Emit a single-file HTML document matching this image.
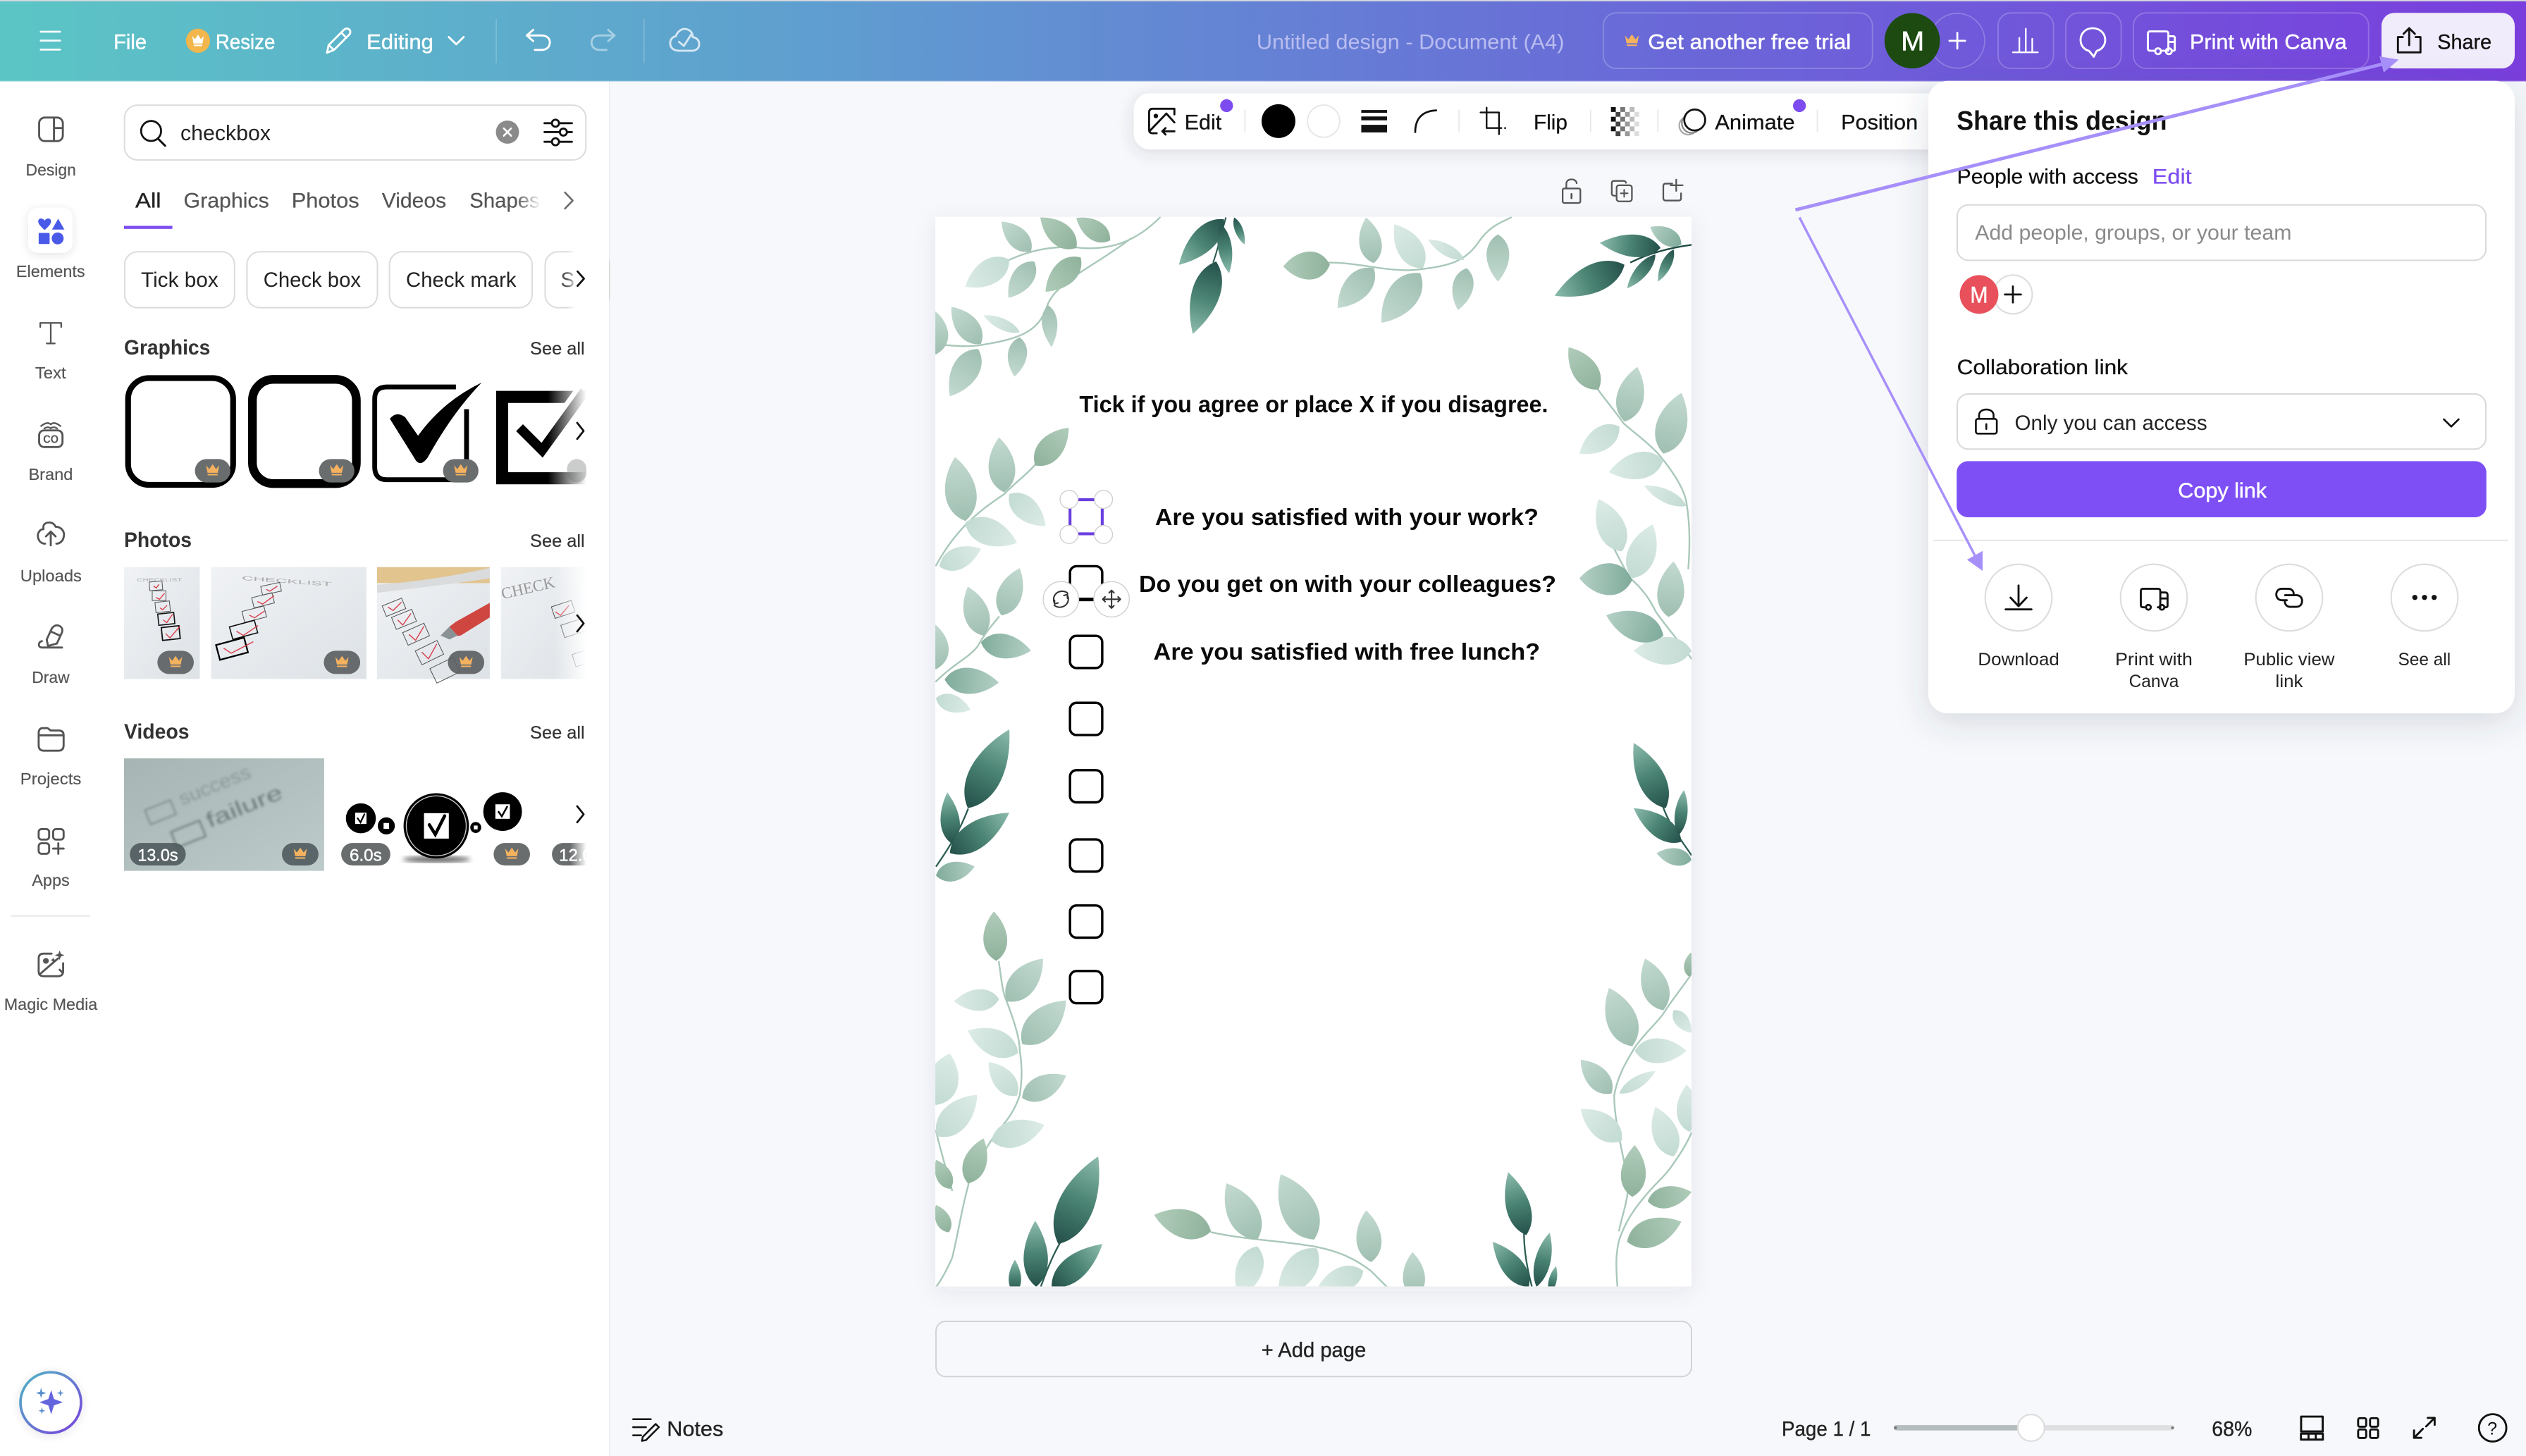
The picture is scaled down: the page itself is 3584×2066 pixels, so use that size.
<!DOCTYPE html>
<html><head><meta charset="utf-8"><title>Untitled design</title>
<style>
html,body{margin:0;padding:0;background:#f7f8fb;width:3584px;height:2066px;overflow:hidden}
svg{display:block}
text{font-family:"Liberation Sans",sans-serif;fill:#222}
.m{stroke:#222;stroke-width:.15}
.w{fill:#fff;stroke:#fff;stroke-width:.2}
.r{fill:#555;font-size:10px;stroke:#555;stroke-width:.08}
.ic{fill:none;stroke:#555;stroke-width:1.25;stroke-linecap:round;stroke-linejoin:round}
.wi{fill:none;stroke:#fff;stroke-width:1.25;stroke-linecap:round;stroke-linejoin:round}
.bi{fill:none;stroke:#111;stroke-width:1.25;stroke-linecap:round;stroke-linejoin:round}
.b{font-weight:bold;fill:#0a0a0a}
.tab{fill:#555;font-size:13px;stroke:#555;stroke-width:.1}
.sa{fill:#333;font-size:11px;stroke:#333;stroke-width:.1}
.h{fill:#333;font-size:13px;font-weight:bold}
.box{fill:none;stroke:#000;stroke-width:1.5}
.stem{fill:none;stroke:#a9c8b9;stroke-width:1.05;stroke-linecap:round}
</style></head><body>
<svg xmlns="http://www.w3.org/2000/svg" width="3584" height="2066" viewBox="0 0 1568 903.875">
<defs>
<linearGradient id="top" x1="0" x2="1" y1="0" y2="0"><stop offset="0" stop-color="#5bc5c5"/><stop offset=".33" stop-color="#5f9dd0"/><stop offset=".66" stop-color="#6a68d8"/><stop offset="1" stop-color="#7a3edd"/></linearGradient>
<linearGradient id="ring" x1="0" x2="1" y1="0" y2="1"><stop offset="0" stop-color="#4fb8c4"/><stop offset="1" stop-color="#7a3edd"/></linearGradient>
<linearGradient id="a"><stop offset="0" stop-color="#9fbfb1"/><stop offset="1" stop-color="#c3dad0"/></linearGradient>
<linearGradient id="b"><stop offset="0" stop-color="#c2dbd2"/><stop offset="1" stop-color="#dcebe6"/></linearGradient>
<linearGradient id="c"><stop offset="0" stop-color="#8fb29c"/><stop offset="1" stop-color="#b0ccba"/></linearGradient>
<linearGradient id="d"><stop offset="0" stop-color="#24504a"/><stop offset=".5" stop-color="#4a8373"/><stop offset="1" stop-color="#8dbcae"/></linearGradient>
<linearGradient id="e"><stop offset="0" stop-color="#7fab9b"/><stop offset="1" stop-color="#b4d0c5"/></linearGradient>
<linearGradient id="fade" x1="0" x2="1" y1="0" y2="0"><stop offset="0" stop-color="#fff" stop-opacity="0"/><stop offset="1" stop-color="#fff"/></linearGradient>
<linearGradient id="p1" x1="0" x2="1" y1="0" y2="1"><stop offset="0" stop-color="#f0f2f5"/><stop offset="1" stop-color="#dde2e6"/></linearGradient>
<linearGradient id="v1" x1="0" x2="1" y1="0" y2="1"><stop offset="0" stop-color="#a6b5b3"/><stop offset="1" stop-color="#bdcaca"/></linearGradient>
<path id="l" d="M0 0C.2-.34.66-.3 1 0C.66.3.2.34 0 0Z"/>
<path id="w" d="M0 0C.2-.44.7-.36 1 0C.7.36.2.44 0 0Z"/>
<path id="n" d="M0 0C.25-.2.7-.17 1 0C.7.17.25.2 0 0Z"/>
<path id="t" d="M0 0C.2-.25.6-.24 1 0C.6.24.2.25 0 0Z"/>
<g id="cr"><path d="M-4.1-3.2L-2.1-.8L0-3.8L2.1-.8L4.1-3.2L3.2 1.5H-3.2Z" fill="#f4b25f"/><rect x="-3.1" y="2.2" width="6.2" height=".9" fill="#f4b25f"/></g>
<clipPath id="pg"><rect x="580.6" y="134.6" width="469.4" height="664"/></clipPath>
<clipPath id="gr"><rect x="77" y="230" width="287" height="80"/></clipPath>
<clipPath id="ph3"><rect x="234" y="352" width="70" height="69.5"/></clipPath>
<clipPath id="ph4"><rect x="311" y="352" width="53" height="69.5"/></clipPath>
<clipPath id="vd1"><rect x="77" y="470.8" width="124.2" height="69.8"/></clipPath>
<filter id="sPanel" x="-20%" y="-20%" width="140%" height="140%"><feDropShadow dx="0" dy="5" stdDeviation="10" flood-color="#40455a" flood-opacity=".18"/></filter>
<filter id="sBar" x="-10%" y="-50%" width="120%" height="220%"><feDropShadow dx="0" dy="2" stdDeviation="5" flood-color="#40455a" flood-opacity=".16"/></filter>
<filter id="sPage" x="-10%" y="-10%" width="120%" height="120%"><feDropShadow dx="0" dy="3" stdDeviation="7" flood-color="#40455a" flood-opacity=".08"/></filter>
<filter id="sTile" x="-50%" y="-50%" width="200%" height="200%"><feDropShadow dx="0" dy="1" stdDeviation="2.5" flood-color="#40455a" flood-opacity=".14"/></filter>
<filter id="bl"><feGaussianBlur stdDeviation=".8"/></filter>
<filter id="bl2"><feGaussianBlur stdDeviation="1.5"/></filter>
</defs>

<rect width="1568" height="904" fill="#f7f8fb"/>

<!-- canvas page -->
<rect x="580.6" y="134.6" width="469.4" height="664" fill="#fff" filter="url(#sPage)"/>
<g clip-path="url(#pg)">
<path class="stem" d="M720 135C705 150 690 155 672 154C655 152 640 155 625 162M702 148C680 165 655 175 650 190C645 205 635 210 610 214C598 216 590 214 581 214"/>
<path class="stem" d="M825 163C845 163 865 170 883 167C900 165 910 162 918 150C925 140 932 138 938 135"/>
<path class="stem" d="M581 351C590 335 600 322 623 307C633 297 637 295 643 288M581 423C592 412 602 408 607 401C612 392 616 388 620 383"/>
<path class="stem" d="M620 597C622 610 622 615 625 622C630 635 633 645 633 652C635 665 634 672 633 680C628 695 620 700 614 710C608 720 602 728 601 736C597 750 595 765 591 781C587 790 584 795 581 799M581 702C584 715 588 728 591 739"/>
<path class="stem" d="M752 765C775 770 795 770 817 774C832 777 842 782 851 789C855 793 858 796 861 799"/>
<path class="stem" d="M1004 799C1003 785 1003 778 1005 770C1009 758 1015 750 1020 744C1027 735 1034 730 1039 722C1044 715 1048 708 1050 703M1005 764C1008 750 1012 742 1010 730C1007 715 1002 695 1002 680C1004 668 1010 658 1015 650C1022 640 1029 635 1034 627C1040 618 1045 612 1049 606"/>
<path class="stem" d="M992 242C998 250 1003 256 1008 263C1016 270 1026 277 1032 285C1040 295 1046 305 1047 313C1049 325 1049 340 1048 353M992 323C1000 335 1005 348 1012 359C1020 366 1024 372 1028 380C1035 390 1044 400 1050 409"/>
<path d="M761 135C758 145 756 155 753 163" fill="none" stroke="#2b5c51" stroke-width=".9"/>
<path d="M1050 152C1035 154 1022 158 1012 163" fill="none" stroke="#1e4a42" stroke-width="1"/>
<path d="M581 538C590 525 596 515 601 502" fill="none" stroke="#2b5c51" stroke-width="1"/>
<path d="M646 799C650 788 654 778 659 770" fill="none" stroke="#2b5c51" stroke-width="1"/>
<path d="M951 799C948 788 946 776 946 765" fill="none" stroke="#2b5c51" stroke-width="1"/>
<path d="M1032 500C1036 512 1044 522 1050 531" fill="none" stroke="#2b5c51" stroke-width="1"/>

<g fill="url(#a)">
<use href="#l" transform="matrix(-18.3 -18.4 18.4 -18.3 640 156)"/>
<use href="#l" transform="matrix(-16 22.6 -22.6 -16 642 162.3)"/>
<use href="#l" transform="matrix(-18.3 -23 23 -18.3 608.9 213.5)"/>
<use href="#t" transform="matrix(2.2 26 -26 2.2 650.6 189.5)"/>
<use href="#l" transform="matrix(-3.3 24.4 -24.4 -3.3 633 209.4)"/>
<use href="#l" transform="matrix(-17.7 29.3 -29.3 -17.7 607.3 216.7)"/>
<use href="#w" transform="matrix(-2 -28 28 -2 581 220)"/>
<use href="#l" transform="matrix(-4.8 -28.3 28.3 -4.8 852.8 163.3)"/>
<use href="#l" transform="matrix(-22.5 24.7 -24.7 -22.5 852.8 166.5)"/>
<use href="#l" transform="matrix(-24 30.8 -30.8 -24 881.6 169.6)"/>
<use href="#l" transform="matrix(-5.5 26 -26 -5.5 910.5 166.5)"/>
<use href="#l" transform="matrix(0 29.3 -29.3 0 929.8 145.5)"/>
<use href="#l" transform="matrix(-3.2 -34.1 34.1 -3.2 623.3 305.6)"/>
<use href="#l" transform="matrix(-6.4 -39.7 39.7 -6.4 599.2 323.4)"/>
<use href="#l" transform="matrix(11.3 -29.3 29.3 11.3 621.7 382)"/>
<use href="#l" transform="matrix(-9.7 -30.4 30.4 -9.7 610.5 394.6)"/>
<use href="#w" transform="matrix(-2 -29 29 -2 581 415.5)"/>
<use href="#l" transform="matrix(22.4 -26.5 26.5 22.4 625 621.6)"/>
<use href="#l" transform="matrix(27.3 -27 27 27.3 634.5 648.1)"/>
<use href="#l" transform="matrix(27.3 -13.9 13.9 27.3 634.5 681.6)"/>
<use href="#l" transform="matrix(-19.2 -34.9 34.9 -19.2 780.5 769.5)"/>
<use href="#l" transform="matrix(-20.8 -40.5 40.5 -20.8 815.8 769.5)"/>
<use href="#l" transform="matrix(-3.1 -32.1 32.1 -3.1 851.1 783.5)"/>
<use href="#l" transform="matrix(-1.6 -28.5 28.5 -1.6 878.4 805.8)"/>
<use href="#l" transform="matrix(-14.4 -36.2 36.2 -14.4 1013.2 649.5)"/>
<use href="#l" transform="matrix(-11.3 -32.1 32.1 -11.3 1032.5 627.2)"/>
<use href="#l" transform="matrix(-19.2 -20.9 20.9 -19.2 1000.4 678.8)"/>
<use href="#l" transform="matrix(8 -33.9 33.9 8 1008.4 261.7)"/>
<use href="#l" transform="matrix(11.2 -37.7 37.7 11.2 1032.5 281.6)"/>
<use href="#l" transform="matrix(3.2 -34.5 34.5 3.2 1035.7 383)"/>
</g>
<g fill="url(#b)">
<use href="#l" transform="matrix(-27.3 16.8 -16.8 -27.3 626.5 161.2)"/>
<use href="#n" transform="matrix(-22.5 -10.4 10.4 -22.5 633 206.2)"/>
<use href="#l" transform="matrix(-17.6 -27.3 27.3 -17.6 883.2 166.5)"/>
<use href="#n" transform="matrix(-22.5 -12.5 12.5 -22.5 908.9 161.2)"/>
<use href="#l" transform="matrix(22.5 19.9 -19.9 22.5 626.5 306.7)"/>
<use href="#l" transform="matrix(32.1 12.5 -12.5 32.1 599.2 324.5)"/>
<use href="#l" transform="matrix(25.7 -11.1 11.1 25.7 583.2 351.7)"/>
<use href="#l" transform="matrix(21.4 7.3 -7.3 21.4 581 433.3)"/>
<use href="#l" transform="matrix(-27.9 1.4 -1.4 -27.9 620.1 620.2)"/>
<use href="#l" transform="matrix(-31.2 -13.9 13.9 -31.2 632 653.7)"/>
<use href="#l" transform="matrix(-17.6 -20.9 20.9 -17.6 631.3 680.2)"/>
<use href="#l" transform="matrix(33 -9.7 9.7 33 615.3 708.1)"/>
<use href="#l" transform="matrix(25 -25.6 25.6 25 581.6 705.3)"/>
<use href="#w" transform="matrix(8.6 -32 32 8.6 581 686)"/>
<use href="#l" transform="matrix(-11.2 32.1 -32.1 -11.2 780.5 773.7)"/>
<use href="#l" transform="matrix(-24 30.8 -30.8 -24 817.4 775)"/>
<use href="#l" transform="matrix(-28.9 11.2 -11.2 -28.9 846.3 789)"/>
<use href="#l" transform="matrix(32.1 0 0 32.1 1014.8 652.3)"/>
<use href="#n" transform="matrix(22.4 -13.9 13.9 22.4 1005.2 678.8)"/>
<use href="#l" transform="matrix(-25.6 -19.5 19.5 -25.6 1006.8 708.1)"/>
<use href="#l" transform="matrix(-11.3 -30.7 30.7 -11.3 1038.9 717.9)"/>
<use href="#l" transform="matrix(-1.5 -29.3 29.3 -1.5 1048.5 702.6)"/>
<use href="#l" transform="matrix(11 14 -14 11 1038.9 627.2)"/>
<use href="#l" transform="matrix(-24.8 16.8 -16.8 -24.8 1005.2 264.8)"/>
<use href="#l" transform="matrix(-33.7 7.3 -7.3 -33.7 1032.5 285.8)"/>
<use href="#n" transform="matrix(-26.3 -12.5 12.5 -26.3 1046.9 314)"/>
<use href="#l" transform="matrix(-14.5 -32.5 32.5 -14.5 1006.8 342.3)"/>
<use href="#l" transform="matrix(12.8 -33.5 33.5 12.8 1013.2 359)"/>
<use href="#l" transform="matrix(-35.9 0 0 -35.9 1050 404)"/>
</g>
<g fill="url(#c)">
<use href="#l" transform="matrix(-22.4 -18.9 18.9 -22.4 668.2 153.9)"/>
<use href="#l" transform="matrix(-21 -14 14 -21 689.1 149.3)"/>
<use href="#l" transform="matrix(-21.8 21.3 -21.3 -21.8 670.8 159.8)"/>
<use href="#w" transform="matrix(-28.9 1 -1 -28.9 825.5 164.4)"/>
<use href="#l" transform="matrix(20.8 -23.4 23.4 20.8 642.6 288.9)"/>
<use href="#l" transform="matrix(-1.6 -30.7 30.7 -1.6 618.5 596.5)"/>
<use href="#l" transform="matrix(9.7 -27.9 27.9 9.7 600.8 734.6)"/>
<use href="#l" transform="matrix(-9 -18 18 -9 590 738)"/>
<use href="#l" transform="matrix(-8 -17 17 -8 589 765)"/>
<use href="#l" transform="matrix(-35.3 -10.3 10.3 -35.3 751.7 764.5)"/>
<use href="#l" transform="matrix(1.6 -32.1 32.1 1.6 1013.2 743)"/>
<use href="#l" transform="matrix(27.2 -5.8 5.8 27.2 1022.8 745.8)"/>
<use href="#l" transform="matrix(33.7 -12.5 12.5 33.7 1010 770.9)"/>
<use href="#l" transform="matrix(-18.6 -26.2 26.2 -18.6 992.3 241.8)"/>
<use href="#l" transform="matrix(1 -15 15 1 1048.5 606.3)"/>
</g>
<g fill="url(#e)">
<use href="#l" transform="matrix(31.1 5.2 -5.2 31.1 608.9 398.8)"/>
<use href="#l" transform="matrix(33.6 2 -2 33.6 586.4 421.8)"/>
<use href="#w" transform="matrix(-32.8 -1 1 -32.8 1013.2 360)"/>
<use href="#l" transform="matrix(-35.4 -12.6 12.6 -35.4 1032.5 394.6)"/>
<use href="#l" transform="matrix(-19.3 -10.9 10.9 -19.3 1043.7 151.8)"/>
<use href="#l" transform="matrix(24 -5.5 5.5 24 581 543.5)"/>
<use href="#l" transform="matrix(-21.7 -4.2 4.2 -21.7 1050 533.8)"/>
</g>
<g fill="url(#d)">
<use href="#t" transform="matrix(-27.9 28.3 -28.3 -27.9 759.7 136.1)"/>
<use href="#n" transform="matrix(4.9 30.4 -30.4 4.9 758 139.2)"/>
<use href="#n" transform="matrix(6.4 16.8 -16.8 6.4 766.1 135)"/>
<use href="#t" transform="matrix(-14.5 45 -45 -14.5 754.9 162.3)"/>
<use href="#t" transform="matrix(-37.8 -3.1 3.1 -37.8 1030.8 153.9)"/>
<use href="#t" transform="matrix(-43.4 19.2 -19.2 -43.4 1008.4 164.4)"/>
<use href="#n" transform="matrix(-17.6 21 -21 -17.6 1027.6 158)"/>
<use href="#n" transform="matrix(-9.7 19.9 -19.9 -9.7 1038.9 154.9)"/>
<use href="#t" transform="matrix(25.7 -48.9 48.9 25.7 600.8 501.7)"/>
<use href="#t" transform="matrix(-3.2 -32.1 32.1 -3.2 591.2 524)"/>
<use href="#t" transform="matrix(36.9 -25.1 25.1 36.9 589.6 529.6)"/>
<use href="#t" transform="matrix(24.7 -54.4 54.4 24.7 657 772.3)"/>
<use href="#t" transform="matrix(-.6 -41 41 -.6 643.2 798.8)"/>
<use href="#t" transform="matrix(31.5 -26.5 26.5 31.5 652.8 798.8)"/>
<use href="#t" transform="matrix(0 -21 21 0 630 803)"/>
<use href="#t" transform="matrix(-11.2 -39 39 -11.2 947.4 766.7)"/>
<use href="#t" transform="matrix(-22.4 -27.9 27.9 -22.4 949 798.8)"/>
<use href="#n" transform="matrix(8.1 -33.5 33.5 8.1 953.8 798.8)"/>
<use href="#n" transform="matrix(4 -17 17 4 961.9 803)"/>
<use href="#t" transform="matrix(-19.9 -40.5 40.5 -19.9 1034 501.7)"/>
<use href="#t" transform="matrix(-29.6 -20.9 20.9 -29.6 1043.7 522.6)"/>
<use href="#n" transform="matrix(3.3 -27.9 27.9 3.3 1042 518.4)"/>
</g>
</g>

<!-- page text -->
<text class="b" x="670" y="256" font-size="14.6" textLength="291" lengthAdjust="spacingAndGlyphs">Tick if you agree or place X if you disagree.</text>
<text class="b" x="717" y="326" font-size="14.6" textLength="238" lengthAdjust="spacingAndGlyphs">Are you satisfied with your work?</text>
<text class="b" x="707" y="367.5" font-size="14.6" textLength="259" lengthAdjust="spacingAndGlyphs">Do you get on with your colleagues?</text>
<text class="b" x="716" y="409.5" font-size="14.6" textLength="240" lengthAdjust="spacingAndGlyphs">Are you satisfied with free lunch?</text>

<!-- checkboxes -->
<rect class="box" x="664.2" y="351.5" width="20" height="21" rx="4"/>
<rect class="box" x="664.2" y="394.7" width="20" height="20" rx="4"/>
<rect class="box" x="664.2" y="436.3" width="20" height="20" rx="4"/>
<rect class="box" x="664.2" y="478.1" width="20" height="20" rx="4"/>
<rect class="box" x="664.2" y="521.1" width="20" height="20" rx="4"/>
<rect class="box" x="664.2" y="562.1" width="20" height="20" rx="4"/>
<rect class="box" x="664.2" y="602.8" width="20" height="20" rx="4"/>
<!-- selected -->
<rect x="664.2" y="310.2" width="20" height="21.2" rx="3" fill="none" stroke="#6a3fe0" stroke-width="1.8"/>
<g fill="#fff" stroke="#cfcfcf" stroke-width=".6">
<circle cx="663.6" cy="310" r="5.6"/><circle cx="685" cy="310" r="5.6"/><circle cx="663.6" cy="331.8" r="5.6"/><circle cx="685" cy="331.8" r="5.6"/>
</g>
<rect x="668" y="371" width="12" height="1.4" fill="#000"/>
<g fill="#fff" stroke="#cfcfcf" stroke-width=".6"><circle cx="658.6" cy="372" r="11"/><circle cx="690" cy="372" r="11"/></g>
<g fill="none" stroke="#333" stroke-width=".9" stroke-linecap="round" stroke-linejoin="round">
<path d="M662.8 368.3C660.5 366.3 656.6 366.7 654.8 369.4C653.8 371 653.8 373 654.6 374.4M654.6 374.9V372.6M654.6 374.9L656.8 374.3M654.4 375.7C656.7 377.7 660.6 377.3 662.4 374.6C663.4 373 663.4 371 662.6 369.6M662.6 369.1V371.4M662.6 369.1L660.4 369.7"/>
<path d="M690 366.5V377.5M684.5 372H695.5M688.5 368L690 366.5L691.5 368M688.5 376L690 377.5L691.5 376M686 370.5L684.5 372L686 373.5M694 370.5L695.5 372L694 373.5"/>
</g>

<!-- add page -->
<rect x="581" y="820.3" width="469" height="34.3" rx="6" fill="#f7f8fb" stroke="#cfd0d2" stroke-width=".8"/>
<text class="m" x="783" y="842.5" font-size="13" textLength="65" lengthAdjust="spacingAndGlyphs">+ Add page</text>

<!-- page action icons -->
<g class="ic" stroke-width="1">
<rect x="970" y="117" width="11" height="9" rx="1" style="stroke-width:1"/>
<path d="M972.3 117V114C972.3 110.5 978.5 110.5 978.7 113.8" style="stroke-width:1"/>
<path d="M975.5 120.5V123" style="stroke-width:1.2"/>
<path d="M1002.8 121.5H1002C1001 121.5 1000.5 121 1000.5 120V113.8C1000.5 112.8 1001 112.3 1002 112.3H1007.8C1008.8 112.3 1009.3 112.8 1009.3 113.5" style="stroke-width:1"/>
<rect x="1003.5" y="115" width="9.5" height="10" rx="1.5" style="stroke-width:1"/>
<path d="M1008.2 117.8V122.2M1006 120H1010.4" style="stroke-width:.9"/>
<path d="M1038 114H1034C1033 114 1032.5 114.5 1032.5 115.5V123C1032.5 124 1033 124.5 1034 124.5H1042C1043 124.5 1043.5 124 1043.5 123V120" style="stroke-width:1"/>
<path d="M1040.5 111.5V118.5M1037 115H1044.5" style="stroke-width:1"/>
</g>

<!-- notes / bottom bar -->
<path class="bi" d="M393 881H404M393 886H401M393 891H398M399 892L407 884L409 886L401 894L398.5 894.5Z" style="stroke-width:1.1"/>
<text class="m" x="414" y="891.3" font-size="13" textLength="35" lengthAdjust="spacingAndGlyphs">Notes</text>
<text class="m" x="1106" y="891.3" font-size="13" textLength="55.3" lengthAdjust="spacingAndGlyphs">Page 1 / 1</text>
<rect x="1175.6" y="884.7" width="174" height="3.3" rx="1.6" fill="#dfe0e2"/>
<rect x="1175.6" y="884.7" width="85" height="3.3" rx="1.6" fill="#b5bdbf"/>
<circle cx="1176.6" cy="886.4" r=".9" fill="#777"/><circle cx="1348.6" cy="886.4" r=".9" fill="#777"/>
<circle cx="1260.8" cy="886.4" r="8.3" fill="#fff" stroke="#dcdcdc" stroke-width=".9"/>
<text class="m" x="1373" y="891.3" font-size="13" textLength="25" lengthAdjust="spacingAndGlyphs">68%</text>
<g class="bi">
<path d="M1428.4 879.4H1441.8V888.6H1428.4Z" style="stroke-width:1.3"/>
<rect x="1428.3" y="890" width="13.6" height="3.7" fill="none" stroke="#111" stroke-width="1.3"/>
<path d="M1433 890.5V893.5M1437.5 890.5V893.5"/>
<rect x="1463.8" y="880.4" width="5" height="5.3" rx="1"/><rect x="1471.2" y="880.4" width="5" height="5.3" rx="1"/>
<rect x="1463.8" y="887.4" width="5" height="5.3" rx="1"/><rect x="1471.2" y="887.4" width="5" height="5.3" rx="1"/>
<path d="M1504 887L1498.5 892.6M1498.5 888V892.6H1503M1506 885.5L1511.3 880.2M1507 880.2H1511.3V884.5"/>
<circle cx="1547.3" cy="886.4" r="8.5"/>
</g>
<text x="1544" y="890.5" font-size="11" style="fill:#111">?</text>

<!-- sidebar -->
<rect x="0" y="50" width="378" height="854" fill="#fff"/>
<rect x="378" y="50" width=".7" height="854" fill="#eceef2"/>
<rect x="17.5" y="129" width="27.5" height="28" rx="6" fill="#fff" filter="url(#sTile)"/>

<!-- rail icons -->
<g class="ic">
<rect x="24.3" y="73" width="14.7" height="14.6" rx="3.5"/><path d="M33.5 73V87.6M33.5 79.5H39"/>
<path d="M25 203V200.5H38V203M31.5 200.5V213M29 213.2H34" style="stroke-width:1"/>
<path d="M25.5 264.5C28 262.5 30 262 31.5 263.5C33 262 35 262.5 37.5 264.5M27.5 266C29 265 30.5 265 31.5 266C32.5 265 34 265 35.5 266" style="stroke-width:1"/>
<rect x="24.3" y="267.2" width="14.5" height="10.3" rx="3"/>
<path d="M27.5 325.5C29 324 33 323.5 34.5 327C38 327 40.5 330 39.5 333.5C39 336 37 337.5 35 337.5M28 337.5C25 337.5 23.5 335 23.5 332.5C23.5 330.5 25 328.5 27 328.5C26.8 327 27 326 27.5 325.5M31.5 338.5V330.5M28.5 333L31.5 330L34.5 333"/>
<path d="M29 397L32 390.5C33 388.5 35 387.7 36.8 388.5C38.5 389.3 39.2 391 38.3 393L35.3 399.5L29.8 401ZM31.5 392L37 394.5M26 398C23.5 398.5 23.5 402 26 402H38.5"/>
<path d="M24 455C24 453 25 452 26.5 452H29.5L31.5 453.5H36.5C38.5 453.5 39.5 454.5 39.5 456.5V462.5C39.5 464.8 38.5 466 36.5 466H27C25 466 24 464.8 24 462.5ZM24 456.5H39.5"/>
<rect x="24" y="514.7" width="6.5" height="6.5" rx="1.8"/><rect x="33" y="514.7" width="6.5" height="6.5" rx="1.8"/><rect x="24" y="523.5" width="6.5" height="6.5" rx="1.8"/>
<path d="M33 526.8H39.5M36.2 523.5V530"/>
<path d="M32 592H27C25 592 24 593 24 595V603C24 605 25 606 27 606H36C38 606 39.2 605 39.2 603V598M24.5 605L36 595M37 602L39 604"/>
</g>
<circle cx="28.5" cy="596.5" r="1.8" fill="#555"/>
<path d="M37 590L37.8 592.2L40 593L37.8 593.8L37 596L36.2 593.8L34 593L36.2 592.2ZM33 594.5L33.5 595.5L34.5 596L33.5 596.5L33 597.5L32.5 596.5L31.5 596L32.5 595.5Z" fill="#555"/>
<text x="26.8" y="275" font-size="7" font-weight="bold" textLength="9.5" lengthAdjust="spacingAndGlyphs" style="fill:#555">CO</text>
<!-- elements icon -->
<g fill="#4a5ae8">
<path d="M27.7 142.8C25 140.5 23.7 138.8 23.7 137.5C23.7 135.9 25 135.4 26 135.7C26.8 135.9 27.4 136.4 27.7 137C28 136.4 28.6 135.9 29.4 135.7C30.4 135.4 31.7 135.9 31.7 137.5C31.7 138.8 30.4 140.5 27.7 142.8Z"/>
<path d="M36.1 135.8L40 142.5H32.3Z"/>
<rect x="24" y="144.6" width="6.8" height="6.9" rx=".5"/>
<circle cx="35.8" cy="148" r="3.7"/>
</g>
<text class="r" x="16" y="109" textLength="31.2" lengthAdjust="spacingAndGlyphs">Design</text>
<text class="r" x="10" y="172" textLength="42.8" lengthAdjust="spacingAndGlyphs">Elements</text>
<text class="r" x="21.8" y="235" textLength="19.2" lengthAdjust="spacingAndGlyphs">Text</text>
<text class="r" x="17.7" y="298" textLength="27.5" lengthAdjust="spacingAndGlyphs">Brand</text>
<text class="r" x="12.6" y="361" textLength="38.1" lengthAdjust="spacingAndGlyphs">Uploads</text>
<text class="r" x="19.8" y="424" textLength="23.4" lengthAdjust="spacingAndGlyphs">Draw</text>
<text class="r" x="12.6" y="487" textLength="37.9" lengthAdjust="spacingAndGlyphs">Projects</text>
<text class="r" x="19.8" y="550" textLength="23.4" lengthAdjust="spacingAndGlyphs">Apps</text>
<text class="r" x="2.5" y="627" textLength="58" lengthAdjust="spacingAndGlyphs">Magic Media</text>
<rect x="7" y="568.2" width="49" height=".8" fill="#e5e5e5"/>

<!-- magic button -->
<circle cx="31.5" cy="870.7" r="18.8" fill="#fff" stroke="url(#ring)" stroke-width="1.6" filter="url(#sTile)"/>
<path d="M31.8 863L33.5 868.5L39 870.5L33.5 872.5L31.8 878L30 872.5L24.5 870.5L30 868.5Z" fill="#6465de"/>
<path d="M25.5 861.5L26.2 864L28.8 864.8L26.2 865.6L25.5 868L24.8 865.6L22.2 864.8L24.8 864ZM37.5 862.5L38 864.3L39.8 864.8L38 865.3L37.5 867L37 865.3L35.2 864.8L37 864.3ZM26 873.5L26.5 875.3L28.2 875.8L26.5 876.3L26 878L25.5 876.3L23.8 875.8L25.5 875.3Z" fill="#5a8fce"/>

<!-- search -->
<rect x="77.3" y="65.3" width="286.4" height="34" rx="8" fill="#fff" stroke="#dcdcdc" stroke-width=".9"/>
<circle cx="93.8" cy="81.3" r="6.2" fill="none" stroke="#111" stroke-width="1.2"/><path d="M98 86L102.5 90.5" stroke="#111" stroke-width="1.3" stroke-linecap="round"/>
<text x="112" y="87" font-size="13.5" textLength="56" lengthAdjust="spacingAndGlyphs" style="fill:#222">checkbox</text>
<circle cx="315" cy="82" r="7.2" fill="#8a8a8a"/><path d="M312.7 79.7L317.3 84.3M317.3 79.7L312.7 84.3" stroke="#fff" stroke-width="1.1" stroke-linecap="round"/>
<g class="bi" stroke-width="1.1">
<path d="M338 76.5H342.5M347 76.5H355M338 82H347.5M352 82H355M338 88H342.5M347 88H355"/>
<circle cx="344.8" cy="76.5" r="2.2"/><circle cx="349.7" cy="82" r="2.2"/><circle cx="344.8" cy="88" r="2.2"/>
</g>

<!-- tabs -->
<text class="m" x="84" y="128.8" font-size="13" textLength="16" lengthAdjust="spacingAndGlyphs" style="fill:#222">All</text>
<text class="tab" x="114" y="128.8" textLength="53" lengthAdjust="spacingAndGlyphs">Graphics</text>
<text class="tab" x="181" y="128.8" textLength="42" lengthAdjust="spacingAndGlyphs">Photos</text>
<text class="tab" x="237" y="128.8" textLength="40" lengthAdjust="spacingAndGlyphs">Videos</text>
<text class="tab" x="291.5" y="128.8" textLength="43.5" lengthAdjust="spacingAndGlyphs">Shapes</text>
<rect x="320" y="115" width="16" height="18" fill="url(#fade)"/>
<path d="M350.7 119.5L355.5 124.5L350.7 129.5" fill="none" stroke="#666" stroke-width="1.1" stroke-linecap="round" stroke-linejoin="round"/>
<rect x="77" y="140.2" width="30" height="1.9" fill="#7d4cf0"/>

<!-- chips -->
<g fill="#fff" stroke="#dcdcdc" stroke-width=".9">
<rect x="77.4" y="156.3" width="68.2" height="34.7" rx="8"/>
<rect x="153.3" y="156.3" width="81" height="34.7" rx="8"/>
<rect x="241.8" y="156.3" width="88.5" height="34.7" rx="8"/>
<rect x="338.4" y="156.3" width="40" height="34.7" rx="8"/>
</g>
<text x="87.5" y="178" font-size="13" textLength="48" lengthAdjust="spacingAndGlyphs" style="fill:#222">Tick box</text>
<text x="163.5" y="178" font-size="13" textLength="60.5" lengthAdjust="spacingAndGlyphs" style="fill:#222">Check box</text>
<text x="252" y="178" font-size="13" textLength="68.5" lengthAdjust="spacingAndGlyphs" style="fill:#222">Check mark</text>
<text x="348" y="178" font-size="13" style="fill:#555">S</text>
<rect x="356" y="150" width="22" height="46" fill="#fff"/>
<rect x="352" y="150" width="6" height="46" fill="url(#fade)"/>
<path d="M358.5 168.5L362.5 173L358.5 177.5" fill="none" stroke="#111" stroke-width="1.2" stroke-linecap="round" stroke-linejoin="round"/>

<!-- graphics -->
<text class="h" x="77" y="220" textLength="53.5" lengthAdjust="spacingAndGlyphs">Graphics</text>
<text class="sa" x="329" y="220" textLength="34" lengthAdjust="spacingAndGlyphs">See all</text>
<g clip-path="url(#gr)">
<rect x="79.5" y="234.7" width="65.2" height="66.3" rx="13" fill="#fff" stroke="#000" stroke-width="3.6"/>
<rect x="156.7" y="235.5" width="64.5" height="64.7" rx="13" fill="#fff" stroke="#000" stroke-width="5.4"/>
<path d="M283 240.2H240C235 240.2 232.6 242.8 232.6 247.5V290C232.6 295 235 297.8 240 297.8H282C287 297.8 289.6 295 289.6 290V254" fill="none" stroke="#000" stroke-width="3"/>
<path d="M242 260Q246 255 251.5 259L259.5 270.5Q275 249 299 237.5Q281 256 265.5 284Q260.5 291 257 284Z" fill="#000"/>
<rect x="311.7" y="246.4" width="60" height="50.5" fill="none" stroke="#000" stroke-width="7.5"/>
<path d="M322.5 265.5L336.5 279.5L363 243" fill="none" stroke="#fff" stroke-width="12"/>
<path d="M322.5 265.5L336.5 279.5L363 243" fill="none" stroke="#000" stroke-width="6"/>
</g>
<rect x="340" y="230" width="24" height="78" fill="url(#fade)"/>
<rect x="364" y="225" width="14" height="90" fill="#fff"/>
<path d="M358.3 262.5L362.3 267.5L358.3 272.5" fill="none" stroke="#111" stroke-width="1.2" stroke-linecap="round" stroke-linejoin="round"/>
<g fill="#6a6d6e">
<rect x="121" y="285" width="22" height="14.5" rx="7.2"/><rect x="198" y="285" width="22" height="14.5" rx="7.2"/><rect x="275" y="285" width="22" height="14.5" rx="7.2"/>
<rect x="352" y="285" width="12" height="14.5" rx="6" opacity=".35"/>
</g>
<use href="#cr" x="132" y="292"/><use href="#cr" x="209" y="292"/><use href="#cr" x="286" y="292"/>

<!-- photos -->
<text class="h" x="77" y="339.5" textLength="42" lengthAdjust="spacingAndGlyphs">Photos</text>
<text class="sa" x="329" y="339.5" textLength="34" lengthAdjust="spacingAndGlyphs">See all</text>
<rect x="77" y="352" width="47" height="69.5" fill="url(#p1)"/>
<rect x="131" y="352" width="96.5" height="69.5" fill="url(#p1)"/>
<rect x="234" y="352" width="70" height="69.5" fill="url(#p1)"/>
<rect x="311" y="352" width="53" height="69.5" fill="url(#p1)"/>
<g clip-path="url(#ph3)">
<rect x="234" y="352" width="70" height="10" fill="#e2c48f"/>
<path d="M234 363C260 361 285 357 304 352.5V359C285 362 260 365 234 368Z" fill="#d9dbdc"/>
<path d="M279 389L283 386L304.500 374V383L286 394.500L282 395Z" fill="#cf4540"/>
<path d="M273.500 394.500L279 389L284 394.500L279 397Z" fill="#8b9295"/>
</g>
<text x="85" y="361" font-size="3" textLength="28" lengthAdjust="spacingAndGlyphs" style="fill:#aaa">CHECKLIST</text>
<text x="150" y="360" font-size="3.5" textLength="56" lengthAdjust="spacingAndGlyphs" transform="rotate(4 150 360)" style="fill:#aaa">CHECKLIST</text>
<g clip-path="url(#ph4)"><text x="312" y="372" font-size="10" transform="rotate(-13 312 372)" style="fill:#999;font-family:'Liberation Serif',serif">CHECK</text></g>
<g fill="none" stroke="#555" stroke-width=".45">
<rect x="92.8" y="361" width="8" height="5.4" transform="rotate(-5 96.8 363.8)"/>
<rect x="94.5" y="366.8" width="8.5" height="6"/>
<rect x="96.5" y="373.5" width="9" height="6.4" transform="rotate(-6 101 376.8)"/>
<rect x="98.2" y="380.7" width="10" height="7" transform="rotate(-6 103 384)" stroke="#111" stroke-width=".7"/>
<rect x="100.5" y="389" width="11" height="8" transform="rotate(-6 106 393)" stroke="#111" stroke-width=".8"/>
<rect x="162.3" y="362.8" width="12" height="5.5" transform="rotate(-12 168 365.6)"/>
<rect x="156.8" y="369.5" width="13" height="6.5" transform="rotate(-14 163 372.8)"/>
<rect x="150.8" y="377.8" width="14" height="7" transform="rotate(-14 157.8 381.2)"/>
<rect x="143.2" y="387" width="16" height="8" transform="rotate(-15 151.2 391)" stroke="#111" stroke-width=".7"/>
<rect x="135" y="398" width="18" height="9.5" transform="rotate(-15 143.9 402.7)" stroke="#000" stroke-width="1"/>
<rect x="238" y="373.5" width="13" height="7" transform="rotate(-22 244.5 376.8)"/>
<rect x="244" y="380.5" width="13.5" height="8" transform="rotate(-22 250.7 384.4)"/>
<rect x="251" y="389.5" width="14.5" height="8.5" transform="rotate(-24 258.2 393.7)"/>
<rect x="259" y="400.5" width="15" height="9.5" transform="rotate(-26 266.3 405)"/>
<rect x="268" y="411" width="16" height="10" transform="rotate(-26 276.3 415.6)"/>
<g clip-path="url(#ph4)"><rect x="343" y="374.5" width="13" height="7.5" transform="rotate(-18 349.7 378)"/><rect x="349" y="386" width="14" height="8" transform="rotate(-18 355.5 390)"/><rect x="356" y="404" width="14" height="8" transform="rotate(-18 363 408)"/></g>
</g>
<g fill="none" stroke="#d83a48" stroke-width=".6" stroke-linecap="round" stroke-linejoin="round">
<path d="M95.5 364L97 365L98.5 363M97 371L99 372L102 368.5M99.5 377.5L101 378.5L103.5 376M101.5 385L103.5 386.5L107 381.5M103 393.5L105.5 396L111.5 389"/>
<path d="M165.5 366L167.5 367L172 364M160 373.5L163 375L170 370M155 382L158 383.5L164 379.5M147 392L151 394.5L160 388.5M139 402.5L143.5 405.5L157 398.5"/>
<path d="M241 377L244 379L249 374M247 385L250 388L255 381M254 394L258 397.5L263 389M262 405L266 409L271 400"/>
<path d="M345 380L348 382L353 376"/>
</g>
<rect x="344" y="352" width="20" height="70" fill="url(#fade)"/>
<path d="M358.3 382L362.3 387L358.3 392" fill="none" stroke="#111" stroke-width="1.2" stroke-linecap="round" stroke-linejoin="round"/>
<g fill="#5d6163" opacity=".92">
<rect x="97.7" y="404" width="22.6" height="14.4" rx="7.2"/><rect x="201" y="404" width="22.6" height="14.4" rx="7.2"/><rect x="278" y="404" width="22.6" height="14.4" rx="7.2"/>
</g>
<use href="#cr" x="109" y="411"/><use href="#cr" x="212.3" y="411"/><use href="#cr" x="289.3" y="411"/>

<!-- videos -->
<text class="h" x="77" y="458.5" textLength="40.5" lengthAdjust="spacingAndGlyphs">Videos</text>
<text class="sa" x="329" y="458.5" textLength="34" lengthAdjust="spacingAndGlyphs">See all</text>
<rect x="77" y="470.8" width="124.2" height="69.8" fill="url(#v1)"/>
<g clip-path="url(#vd1)"><g filter="url(#bl)">
<rect x="91" y="499.5" width="17" height="9.5" transform="rotate(-22 99.5 504)" fill="none" stroke="#7d8a8a" stroke-width=".9"/>
<rect x="107.5" y="512.5" width="19" height="10.5" transform="rotate(-22 117 518)" fill="none" stroke="#6f7c7c" stroke-width="1"/>
<text x="113" y="500" font-size="12" textLength="47" lengthAdjust="spacingAndGlyphs" transform="rotate(-22 113 500)" style="fill:#8b9898">success</text>
<text x="130" y="514" font-size="13" textLength="50" lengthAdjust="spacingAndGlyphs" transform="rotate(-22 130 514)" style="fill:#6f7c7c">failure</text>
</g></g>
<!-- video 2 -->
<ellipse cx="271" cy="533.5" rx="21" ry="2" fill="#666" filter="url(#bl2)"/>
<g fill="#000">
<circle cx="224" cy="508" r="9.3"/><circle cx="239.8" cy="512.7" r="5.3"/><circle cx="270.8" cy="512.7" r="20.3"/><circle cx="295.3" cy="513.7" r="3.4"/><circle cx="312" cy="503.8" r="12"/>
</g>
<circle cx="270.8" cy="512.7" r="18.6" fill="none" stroke="#ccc" stroke-width=".6"/>
<g fill="#fff" stroke="#000" stroke-width="1">
<rect x="262.2" y="503.8" width="17.4" height="17.8" stroke-width="2"/>
<rect x="220" y="504" width="8" height="8" stroke-width="1"/>
<rect x="237.8" y="510.6" width="4" height="4.2" stroke-width=".6"/>
<rect x="293.9" y="512.3" width="2.8" height="2.8" stroke-width=".4"/>
<rect x="307" y="498.8" width="10" height="10" stroke-width="1"/>
</g>
<g fill="none" stroke="#000" stroke-linecap="round">
<path d="M266.5 512L270.2 518L276 506.5" stroke-width="2"/>
<path d="M222 508L223.8 510.5L226.2 505.5" stroke-width="1"/>
<path d="M309.5 504L311.5 506.8L314.8 500.8" stroke-width="1.1"/>
</g>
<g>
<rect x="80.6" y="523.3" width="34.7" height="14" rx="7" fill="#4f5a5d" opacity=".9"/>
<rect x="175" y="523.3" width="22.7" height="14" rx="7" fill="#4f5a5d" opacity=".9"/>
<rect x="211.8" y="523.3" width="30.5" height="14" rx="7" fill="#6a6d6e"/>
<rect x="306.4" y="523.3" width="22.6" height="14" rx="7" fill="#6a6d6e"/>
<rect x="342.6" y="523.3" width="30" height="14" rx="7" fill="#6a6d6e"/>
</g>
<text class="w" x="85.5" y="534.3" font-size="10.5" textLength="25" lengthAdjust="spacingAndGlyphs">13.0s</text>
<text class="w" x="217" y="534.3" font-size="10.5" textLength="20" lengthAdjust="spacingAndGlyphs">6.0s</text>
<text class="w" x="347" y="534.3" font-size="10.5">12.0s</text>
<use href="#cr" x="186.4" y="530"/><use href="#cr" x="317.7" y="530"/>
<rect x="354" y="470" width="10" height="72" fill="url(#fade)"/>
<rect x="364" y="470" width="14" height="72" fill="#fff"/>
<path d="M358.3 500.5L362.3 505.5L358.3 510.5" fill="none" stroke="#111" stroke-width="1.2" stroke-linecap="round" stroke-linejoin="round"/>

<!-- toolbar -->
<rect x="703.8" y="58" width="510" height="34.8" rx="10" fill="#fff" filter="url(#sBar)"/>
<g class="bi">
<path d="M720 67.5H715.5C714 67.5 713.3 68.3 713.3 69.8V80.5C713.3 82 714 82.7 715.5 82.7H718M729 71V67.5H720M713.5 81.5L724 70.5L729 76"/>
<path d="M721.5 81.5H729M723.5 79.5L721.5 81.5L723.5 83.5"/>
</g>
<circle cx="717.5" cy="72" r="1.4" fill="#111"/>
<text class="m" x="735.3" y="80.2" font-size="13" textLength="23" lengthAdjust="spacingAndGlyphs" style="fill:#111">Edit</text>
<circle cx="761.4" cy="65.6" r="4" fill="#7d4cf0"/>
<g fill="#e8e8e8"><rect x="772.4" y="68" width=".8" height="14"/><rect x="905.3" y="68" width=".8" height="14"/><rect x="987" y="68" width=".8" height="14"/><rect x="1028.7" y="68" width=".8" height="14"/><rect x="1127.7" y="68" width=".8" height="14"/></g>
<circle cx="793.6" cy="75.2" r="10.5" fill="#000"/>
<circle cx="821.6" cy="75.2" r="10" fill="#fff" stroke="#e6e6e6" stroke-width=".8"/>
<g fill="#111"><rect x="845" y="68.3" width="16" height="1.7"/><rect x="845" y="72.3" width="16" height="2.4"/><rect x="845" y="77.5" width="16" height="4.7"/></g>
<path d="M878.5 82C878.5 74 882.5 69 891.5 68.5" fill="none" stroke="#111" stroke-width="1.2" stroke-linecap="round"/>
<path d="M919 69.8H930.5V83.3M922.8 66.8V79.5H932" fill="none" stroke="#111" stroke-width="1.05" stroke-linecap="round" stroke-linejoin="round"/>
<circle cx="934.3" cy="79.5" r=".6" fill="#111"/>
<text class="m" x="952" y="80.2" font-size="13" textLength="21" lengthAdjust="spacingAndGlyphs" style="fill:#111">Flip</text>
<g>
<g fill="#111"><rect x="1000" y="66.5" width="3" height="3"/><rect x="1000" y="72.5" width="3" height="3"/><rect x="1000" y="78.5" width="3" height="3"/></g>
<g fill="#444"><rect x="1002.9" y="69.5" width="3" height="3"/><rect x="1002.9" y="75.500" width="3" height="3"/><rect x="1002.9" y="81.500" width="3" height="3"/></g>
<g fill="#777"><rect x="1005.800" y="66.5" width="3" height="3"/><rect x="1005.800" y="72.5" width="3" height="3"/><rect x="1005.800" y="78.5" width="3" height="3"/></g>
<g fill="#999"><rect x="1008.700" y="69.5" width="3" height="3"/><rect x="1008.700" y="75.500" width="3" height="3"/><rect x="1008.700" y="81.500" width="3" height="3"/></g>
<g fill="#bbb"><rect x="1011.600" y="66.5" width="3" height="3"/><rect x="1011.600" y="72.5" width="3" height="3"/><rect x="1011.600" y="78.5" width="3" height="3"/></g>
<g fill="#ddd"><rect x="1014.500" y="69.5" width="3" height="3"/><rect x="1014.500" y="75.500" width="3" height="3"/><rect x="1014.500" y="81.500" width="3" height="3"/></g>
</g>
<circle cx="1048" cy="78" r="5.6" fill="none" stroke="#aaa" stroke-width="1"/>
<circle cx="1050" cy="76.5" r="6" fill="#fff" stroke="#888" stroke-width="1"/>
<circle cx="1052" cy="74.5" r="6.5" fill="#fff" stroke="#111" stroke-width="1.2"/>
<text class="m" x="1064.6" y="80.2" font-size="13" textLength="49.5" lengthAdjust="spacingAndGlyphs" style="fill:#111">Animate</text>
<circle cx="1117" cy="65.6" r="4" fill="#7d4cf0"/>
<text class="m" x="1142.8" y="80.2" font-size="13" textLength="47.7" lengthAdjust="spacingAndGlyphs" style="fill:#111">Position</text>

<!-- top bar -->
<rect x="0" y="0" width="1568" height="50.5" fill="url(#top)"/>
<rect x="0" y="0" width="1568" height=".8" fill="#d6d9dd"/>
<rect x="0" y="49.8" width="1568" height=".7" fill="#ffffff" opacity=".15"/>
<path d="M25.3 19.7H37.3M25.3 25.2H37.3M25.3 30.8H37.3" stroke="#fff" stroke-width="1.2" stroke-linecap="round" opacity=".95"/>
<text class="w" x="70.5" y="30.3" font-size="13" textLength="20.5" lengthAdjust="spacingAndGlyphs">File</text>
<circle cx="122.9" cy="25.3" r="7.5" fill="#f2b64c"/>
<path d="M119.3 22.3L121 24.4L122.9 21.5L124.8 24.4L126.5 22.3L125.7 27H120.1Z" fill="#fff"/><rect x="120.3" y="27.7" width="5.2" height=".9" fill="#fff"/>
<text class="w" x="133.8" y="30.3" font-size="13" textLength="37" lengthAdjust="spacingAndGlyphs">Resize</text>
<path class="wi" d="M203 32.7L204 28L213.5 18.5C214.5 17.5 216 17.5 216.8 18.3C217.7 19.2 217.7 20.6 216.7 21.6L207.3 31ZM204 28L207.3 31M211.8 20.2L215 23.4"/>
<text class="w" x="227.5" y="30.3" font-size="13" textLength="41.5" lengthAdjust="spacingAndGlyphs">Editing</text>
<path class="wi" d="M278.6 23L283.2 27.5L287.8 23"/>
<rect x="307.7" y="11.7" width=".7" height="27.5" fill="#fff" opacity=".2"/>
<path class="wi" d="M331 18.5L327 22L331 25.5M327 22H336C339.5 22 341.3 23.8 341.3 26.3C341.3 29 339.5 31 336 31H332"/>
<g opacity=".45"><path class="wi" d="M377.5 18.5L381.5 22L377.5 25.5M381.5 22H372.5C369 22 367.2 23.8 367.2 26.3C367.2 29 369 31 372.5 31H376.5"/></g>
<rect x="399.5" y="11.7" width=".7" height="27.5" fill="#fff" opacity=".2"/>
<g opacity=".75"><path class="wi" d="M421.5 31.5C418 31.5 416 29.5 416 26.8C416 24.5 417.5 22.8 419.5 22.5C420.5 19.5 423 17.8 425.5 18C428.5 18.3 430 20.5 430 23C432.5 23.5 434 25 434 27.5C434 30 432 31.5 429.5 31.5ZM421.5 26L424.5 28.5L429 21.5"/></g>
<text x="780" y="30.3" font-size="13" textLength="191" lengthAdjust="spacingAndGlyphs" style="fill:#b9bdf0">Untitled design - Document (A4)</text>
<g fill="none" stroke="#fff" stroke-opacity=".22" stroke-width=".8">
<rect x="995.3" y="8" width="167" height="34.5" rx="8"/>
<circle cx="1215" cy="25.3" r="17"/>
<rect x="1240.3" y="8" width="34.4" height="34.5" rx="8"/>
<rect x="1282.3" y="8" width="34.4" height="34.5" rx="8"/>
<rect x="1324.3" y="8" width="146" height="34.5" rx="8"/>
</g>
<g transform="translate(1013 25.3) scale(1.05)"><use href="#cr"/></g>
<text class="w" x="1023" y="30.3" font-size="13" textLength="126" lengthAdjust="spacingAndGlyphs">Get another free trial</text>
<circle cx="1187" cy="25.3" r="17.2" fill="#1c4a10"/>
<text class="w" x="1180" y="31.3" font-size="17" textLength="14.5" lengthAdjust="spacingAndGlyphs">M</text>
<path d="M1215 20.4V30.2M1210.1 25.3H1219.9" stroke="#fff" stroke-width="1.2" stroke-linecap="round"/>
<path class="wi" d="M1249.5 32.5H1265M1253.5 32.5V23.5M1257.5 32.5V17.8M1261.5 32.5V24" style="stroke-width:1"/>
<path class="wi" d="M1299 17.5C1294.5 17.5 1291.5 20.8 1291.5 24.8C1291.5 28.2 1293.6 30.8 1296.8 31.6L1299.7 35.2L1301.5 31.6C1304.6 30.8 1306.8 28.2 1306.8 24.8C1306.8 20.8 1303.6 17.5 1299 17.5Z"/>
<g class="wi"><path d="M1336.8 31.5H1334.7C1333.7 31.5 1333.3 31 1333.3 30V21C1333.3 20 1333.7 19.5 1334.7 19.5H1344.5C1345.5 19.5 1346 20 1346 21V31.5H1342.5M1346 22.5H1349C1349.7 22.5 1350 23 1350 23.7V30.5C1350 31.2 1349.7 31.5 1349 31.5H1348.5M1346 26H1350"/><circle cx="1339.6" cy="31.8" r="1.8"/><circle cx="1346.3" cy="31.8" r="1.8"/></g>
<text class="w" x="1359.3" y="30.3" font-size="13" textLength="97.5" lengthAdjust="spacingAndGlyphs">Print with Canva</text>
<rect x="1478.3" y="8" width="82.7" height="34.5" rx="8" fill="#f1ecfb"/>
<path class="bi" d="M1491.5 23H1488.5V32.5H1502.5V23H1499.5M1495.5 28V17.8M1492 21L1495.5 17.5L1499 21"/>
<text class="m" x="1513" y="30.3" font-size="13" textLength="33.6" lengthAdjust="spacingAndGlyphs" style="fill:#111">Share</text>

<!-- share panel -->
<rect x="1197" y="50.2" width="364" height="392.6" rx="12" fill="#fff" filter="url(#sPanel)"/>
<text x="1214.6" y="80.5" font-size="16.5" font-weight="bold" textLength="130.5" lengthAdjust="spacingAndGlyphs" style="fill:#111">Share this design</text>
<text class="m" x="1214.8" y="114" font-size="13" textLength="112.5" lengthAdjust="spacingAndGlyphs" style="fill:#111">People with access</text>
<text x="1336" y="114" font-size="13" textLength="24.5" lengthAdjust="spacingAndGlyphs" style="fill:#7d4cf0;stroke:#7d4cf0;stroke-width:.12">Edit</text>
<rect x="1214.9" y="127.2" width="328.2" height="34.4" rx="7" fill="#fff" stroke="#d9d9d9" stroke-width=".9"/>
<text x="1226" y="148.7" font-size="13" textLength="196.5" lengthAdjust="spacingAndGlyphs" style="fill:#8a8a8a">Add people, groups, or your team</text>
<circle cx="1249.5" cy="182.8" r="12" fill="#fff" stroke="#dcdcdc" stroke-width=".9"/>
<path d="M1249.5 177.8V187.8M1244.5 182.8H1254.5" stroke="#111" stroke-width="1.2" stroke-linecap="round"/>
<circle cx="1228.5" cy="182.8" r="12" fill="#e8515c"/>
<text class="w" x="1223" y="187.8" font-size="14" textLength="11" lengthAdjust="spacingAndGlyphs">M</text>
<text class="m" x="1214.8" y="232.3" font-size="13" textLength="106" lengthAdjust="spacingAndGlyphs" style="fill:#111">Collaboration link</text>
<rect x="1214.9" y="244.6" width="328.2" height="34.2" rx="7" fill="#fff" stroke="#d9d9d9" stroke-width=".9"/>
<g class="bi" style="stroke-width:1.15">
<rect x="1226.5" y="260" width="13" height="9.2" rx="1.3"/>
<path d="M1228.5 260V257.8C1228.5 253 1237.5 253 1237.5 257.8V260"/>
<path d="M1233 263.3V266.3"/>
<path d="M1517 260.3L1521.6 264.8L1526.2 260.3"/>
</g>
<text x="1250.6" y="266.8" font-size="13" textLength="119.5" lengthAdjust="spacingAndGlyphs" style="fill:#222">Only you can access</text>
<rect x="1214.6" y="286.3" width="328.8" height="34.8" rx="7" fill="#7d4ff5"/>
<text class="w" x="1352" y="308.8" font-size="13" textLength="55" lengthAdjust="spacingAndGlyphs">Copy link</text>
<rect x="1200" y="335" width="357" height=".9" fill="#e8e8e8"/>
<g fill="#fff" stroke="#dcdcdc" stroke-width=".9">
<circle cx="1253" cy="371" r="20.7"/><circle cx="1337" cy="371" r="20.7"/><circle cx="1421" cy="371" r="20.7"/><circle cx="1505" cy="371" r="20.7"/>
</g>
<g class="bi">
<path d="M1253 363.5V376M1248 371L1253 376.3L1258 371"/>
<path d="M1245 378.3H1261" style="stroke-width:1.3"/>
<path d="M1331 377H1330.3C1329.3 377 1328.9 376.5 1328.9 375.5V367C1328.9 366 1329.3 365.5 1330.3 365.5H1339.5C1340.5 365.5 1341 366 1341 367V377H1339.5M1341 367.8H1344C1345 367.8 1345.5 368.3 1345.5 369.3V375.8C1345.5 376.6 1345.2 377 1344.5 377H1344M1341 371.5H1345.5"/>
<circle cx="1333.6" cy="377" r="1.5"/><circle cx="1342" cy="377" r="1.5"/>
<path d="M1419.5 372.6H1416.5C1414.3 372.6 1413 371 1413 369C1413 367 1414.3 365.5 1416.5 365.5H1420.5C1422.5 365.5 1423.8 367 1423.8 368.8M1418.5 369.5H1425.5C1427.7 369.5 1429 371 1429 373C1429 375.2 1427.7 376.7 1425.5 376.7H1421.5C1419.7 376.7 1418.3 375.3 1418.3 373.3"/>
</g>
<g fill="#111"><circle cx="1499" cy="370.9" r="1.6"/><circle cx="1505" cy="370.9" r="1.6"/><circle cx="1511" cy="370.9" r="1.6"/></g>
<g font-size="11">
<text x="1227.8" y="413" textLength="50.5" lengthAdjust="spacingAndGlyphs" style="fill:#222">Download</text>
<text x="1313" y="413" textLength="48" lengthAdjust="spacingAndGlyphs" style="fill:#222">Print with</text>
<text x="1321.5" y="426.5" textLength="31" lengthAdjust="spacingAndGlyphs" style="fill:#222">Canva</text>
<text x="1392.7" y="413" textLength="56.5" lengthAdjust="spacingAndGlyphs" style="fill:#222">Public view</text>
<text x="1412.5" y="426.5" textLength="17" lengthAdjust="spacingAndGlyphs" style="fill:#222">link</text>
<text x="1488.6" y="413" textLength="32.7" lengthAdjust="spacingAndGlyphs" style="fill:#222">See all</text>
</g>

<!-- annotation arrows -->
<path d="M1114.5 130.3L1482 39" stroke="#a78ffa" stroke-width="2.1" fill="none"/>
<path d="M1489 37L1477 35L1479.7 45Z" fill="#a78ffa"/>
<path d="M1117 135L1226.5 346" stroke="#a78ffa" stroke-width="1.5" fill="none"/>
<path d="M1230.7 354.4L1230.7 342L1221 347.5Z" fill="#a78ffa"/>
</svg>
</body></html>
